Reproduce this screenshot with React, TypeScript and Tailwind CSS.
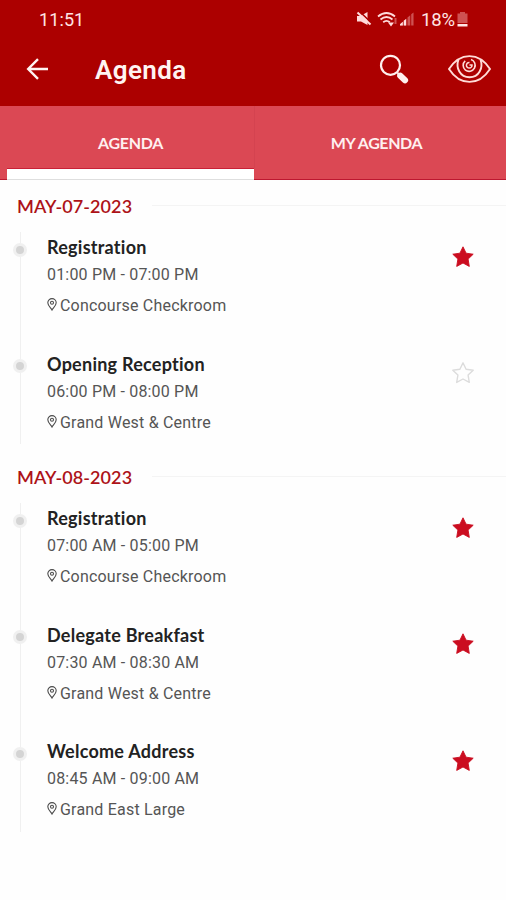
type Session = { title: string; time: string; place: string; starred: boolean };
type Day = { date: string; sessions: Session[] };

const days: Day[] = [
  {
    date: "MAY-07-2023",
    sessions: [
      { title: "Registration", time: "01:00 PM - 07:00 PM", place: "Concourse Checkroom", starred: true },
      { title: "Opening Reception", time: "06:00 PM - 08:00 PM", place: "Grand West & Centre", starred: false },
    ],
  },
  {
    date: "MAY-08-2023",
    sessions: [
      { title: "Registration", time: "07:00 AM - 05:00 PM", place: "Concourse Checkroom", starred: true },
      { title: "Delegate Breakfast", time: "07:30 AM - 08:30 AM", place: "Grand West & Centre", starred: true },
      { title: "Welcome Address", time: "08:45 AM - 09:00 AM", place: "Grand East Large", starred: true },
    ],
  },
];

function StatusIcons() {
  return (
    <div className="flex items-center">
      <svg width="16" height="16" viewBox="0 0 16 16" className="mt-[-2px] text-[#ffdcdc]">
        <path d="M1 5h3.500L11.500 1v13L5 10.500H1z" fill="currentColor" />
        <path d="M3 0l12.500 12" stroke="#ac0000" strokeWidth="1.600" />
        <path d="M1.500 1.500l13 12" stroke="currentColor" strokeWidth="2" />
      </svg>
      <svg width="21" height="17" viewBox="0 0 21 17" className="mt-[-2px] ml-[5px]" fill="none" stroke="#ffdcdc" strokeWidth="1.8">
        <path d="M1 5.500Q9.500-1.500 18 5.500M3.500 8.500Q9.500 3.500 15.500 8.500M6.200 11.300Q9.500 8.500 12.800 11.300" />
        <path d="M11 11.500h6l-3 4z" fill="#ffdcdc" stroke="none" />
        <path d="M18.500 7v6" stroke="#ce5252" strokeWidth="2" />
      </svg>
      <svg width="14" height="14" viewBox="0 0 15 14" className="mt-[-2px] ml-[2px]">
        <path d="M0 14V12.500L3 10V14zM4 14V9L7 6.500V14zM8 14V5.500L11 3V14zM12 14V2L14.500 0V14z" fill="#ce5252" />
        <path d="M0 14V12.500L3 10V14zM4 14V9L6.500 7V14z" fill="#ffdcdc" />
      </svg>
      <span className="ml-[7px] w-[35px] whitespace-nowrap font-['Roboto',sans-serif] text-[18.500px] leading-5 tracking-[-0.2px] text-[#ffe4e4]">18%</span>
      <svg width="11" height="15" viewBox="0 0 11 15" className="mt-[-1px] ml-px">
        <path d="M3 0h5v1.500h2.500V11H.500V1.500H3z" fill="#ce5252" />
        <path d="M.500 12h10v2.500H.500z" fill="#ffe4e4" />
      </svg>
    </div>
  );
}

function Header() {
  return (
    <header className="flex h-[106px] flex-col bg-[#ac0000]">
      <div className="flex h-[38px] items-center justify-between pt-[2px] pr-[38px] pl-[39px]">
        <span className="font-['Roboto',sans-serif] text-[18px] leading-5 tracking-[0.1px] text-[#ffe4e4]">11:51</span>
        <StatusIcons />
      </div>
      <div className="flex h-[64px] items-center pr-[15px] pl-[26px]">
        <svg width="23" height="22" viewBox="0 0 23 22" fill="none" stroke="#fff4f2" strokeWidth="2.4" className="mt-[-2px]">
          <path d="M22 11H2.500M12 1.200L2.200 11l9.800 9.800" />
        </svg>
        <h1 className="ml-[46px] flex-1 font-['Roboto',sans-serif] text-[26px] leading-8 font-semibold tracking-[0.4px] text-[#fff4f2]">Agenda</h1>
        <svg width="31" height="31" viewBox="0 0 31 31" fill="none" stroke="#fff0ee" className="mt-[-2px] mr-[38px]">
          <circle cx="11.500" cy="11.300" r="9.500" strokeWidth="2.200" />
          <path d="M18.500 19l3 3" strokeWidth="2.400" />
          <path d="M21.300 21.800l4.700 4.400" strokeWidth="6.200" strokeLinecap="round" />
        </svg>
        <svg width="43" height="28" viewBox="0 0 43 28" fill="none" stroke="#ffdcd8" strokeWidth="1.900" className="mt-[-2px]">
          <path d="M1 14C12-3.200 31-3.200 42 14C31 31.200 12 31.200 1 14z" />
          <path d="M10.500 4.500C7.500 13 12 22.300 21.500 22.300S35.500 13 32.500 4.500" />
          <path d="M17.200 5.800a6 6 0 1 0 5.800-1.200" strokeWidth="1.600" />
          <path d="M21.500 7.500a2.800 2.800 0 1 0 2.500 2.500h-2.500" strokeWidth="1.500" />
        </svg>
      </div>
    </header>
  );
}

function Tabs() {
  return (
    <nav className="flex h-[74px] border-b border-[#bd1730] bg-[#db4854] font-['Lato',sans-serif] text-[16px] font-bold text-[#fff0f0]">
      <div className="ml-[7px] flex w-[247px] flex-col">
        <div className="flex h-[63px] items-center justify-center border-b border-[#c92137] pt-[12px]">
          <span className="leading-5 tracking-[-0.3px]">AGENDA</span>
        </div>
        <div className="-mb-px h-[11px] shrink-0 border-b border-[#dedede] bg-white" />
      </div>
      <div className="flex h-[62px] flex-1 items-center justify-center border-l border-[#d44350] pt-[12px] pr-[8px]">
        <span className="leading-5 tracking-[-0.4px]">MY AGENDA</span>
      </div>
    </nav>
  );
}

function Star({ filled }: { filled: boolean }) {
  return (
    <svg width="24" height="24" viewBox="0 0 24 24" className="mt-[13px] mr-[31px] shrink-0">
      <path
        d="M12 1.800L15.100 8.200L22.200 9.200L17.100 14.100L18.300 21.400L12 18L5.700 21.400L6.900 14.100L1.800 9.200L8.900 8.200z"
        fill={filled ? "#cb0d20" : "none"}
        stroke={filled ? "#cb0d20" : "#dcdcdc"}
        strokeWidth={filled ? 0.9 : 1.4}
        strokeLinejoin="round"
      />
    </svg>
  );
}

function Pin() {
  return (
    <svg width="10" height="13" viewBox="0 0 10 13" fill="none" stroke="#4c4c4c" strokeWidth="1.100" className="-mt-[3px]">
      <path d="M5 12C4.200 10.200 .800 7.800 .800 4.800a4.200 4.200 0 0 1 8.400 0C9.200 7.800 5.800 10.200 5 12z" />
      <circle cx="5" cy="4.800" r="1.500" />
    </svg>
  );
}

function SessionRow({ session }: { session: Session }) {
  return (
    <li className="flex h-[116.4px] last:h-[96px]">
      <div className="ml-[13px] flex w-[14px] flex-col items-center">
        <div className="h-[11px] w-px bg-[#f0f0f0]" />
        <div className="flex size-[14px] shrink-0 items-center justify-center rounded-full bg-[#f0f0f0]">
          <div className="size-2 rounded-full bg-[#d4d4d4]" />
        </div>
        <div className="w-px flex-1 bg-[#f0f0f0]" />
      </div>
      <div className="ml-5 flex-1 pt-[3.4px] whitespace-nowrap">
        <h3 className="font-['Lato',sans-serif] text-[18px] leading-6 font-bold tracking-[0.25px] text-[#222]">{session.title}</h3>
        <p className="mt-[5px] font-['Roboto',sans-serif] text-[16px] leading-[22px] tracking-[0.18px] text-[#555]">{session.time}</p>
        <div className="mt-[9px] flex items-center gap-[3px]">
          <Pin />
          <p className="font-['Roboto',sans-serif] text-[16px] leading-[22px] tracking-[0.2px] text-[#555]">{session.place}</p>
        </div>
      </div>
      <Star filled={session.starred} />
    </li>
  );
}

export default function App() {
  return (
    <main className="h-[900px] w-[506px] overflow-hidden bg-[#fefefe]">
      <Header />
      <Tabs />
      {days.map((day) => (
        <section key={day.date} className="h-[271px]">
          <div className="flex h-[52px] items-center pl-[17px]">
            <h2 className="-mt-px w-[135px] font-['Lato',sans-serif] text-[18px] leading-6 font-semibold tracking-[0.08px] text-[#ad1218]">{day.date}</h2>
            <div className="-mt-px h-px flex-1 bg-[#f4f4f4]" />
          </div>
          <ul>
            {day.sessions.map((session) => (
              <SessionRow key={session.title} session={session} />
            ))}
          </ul>
        </section>
      ))}
    </main>
  );
}
